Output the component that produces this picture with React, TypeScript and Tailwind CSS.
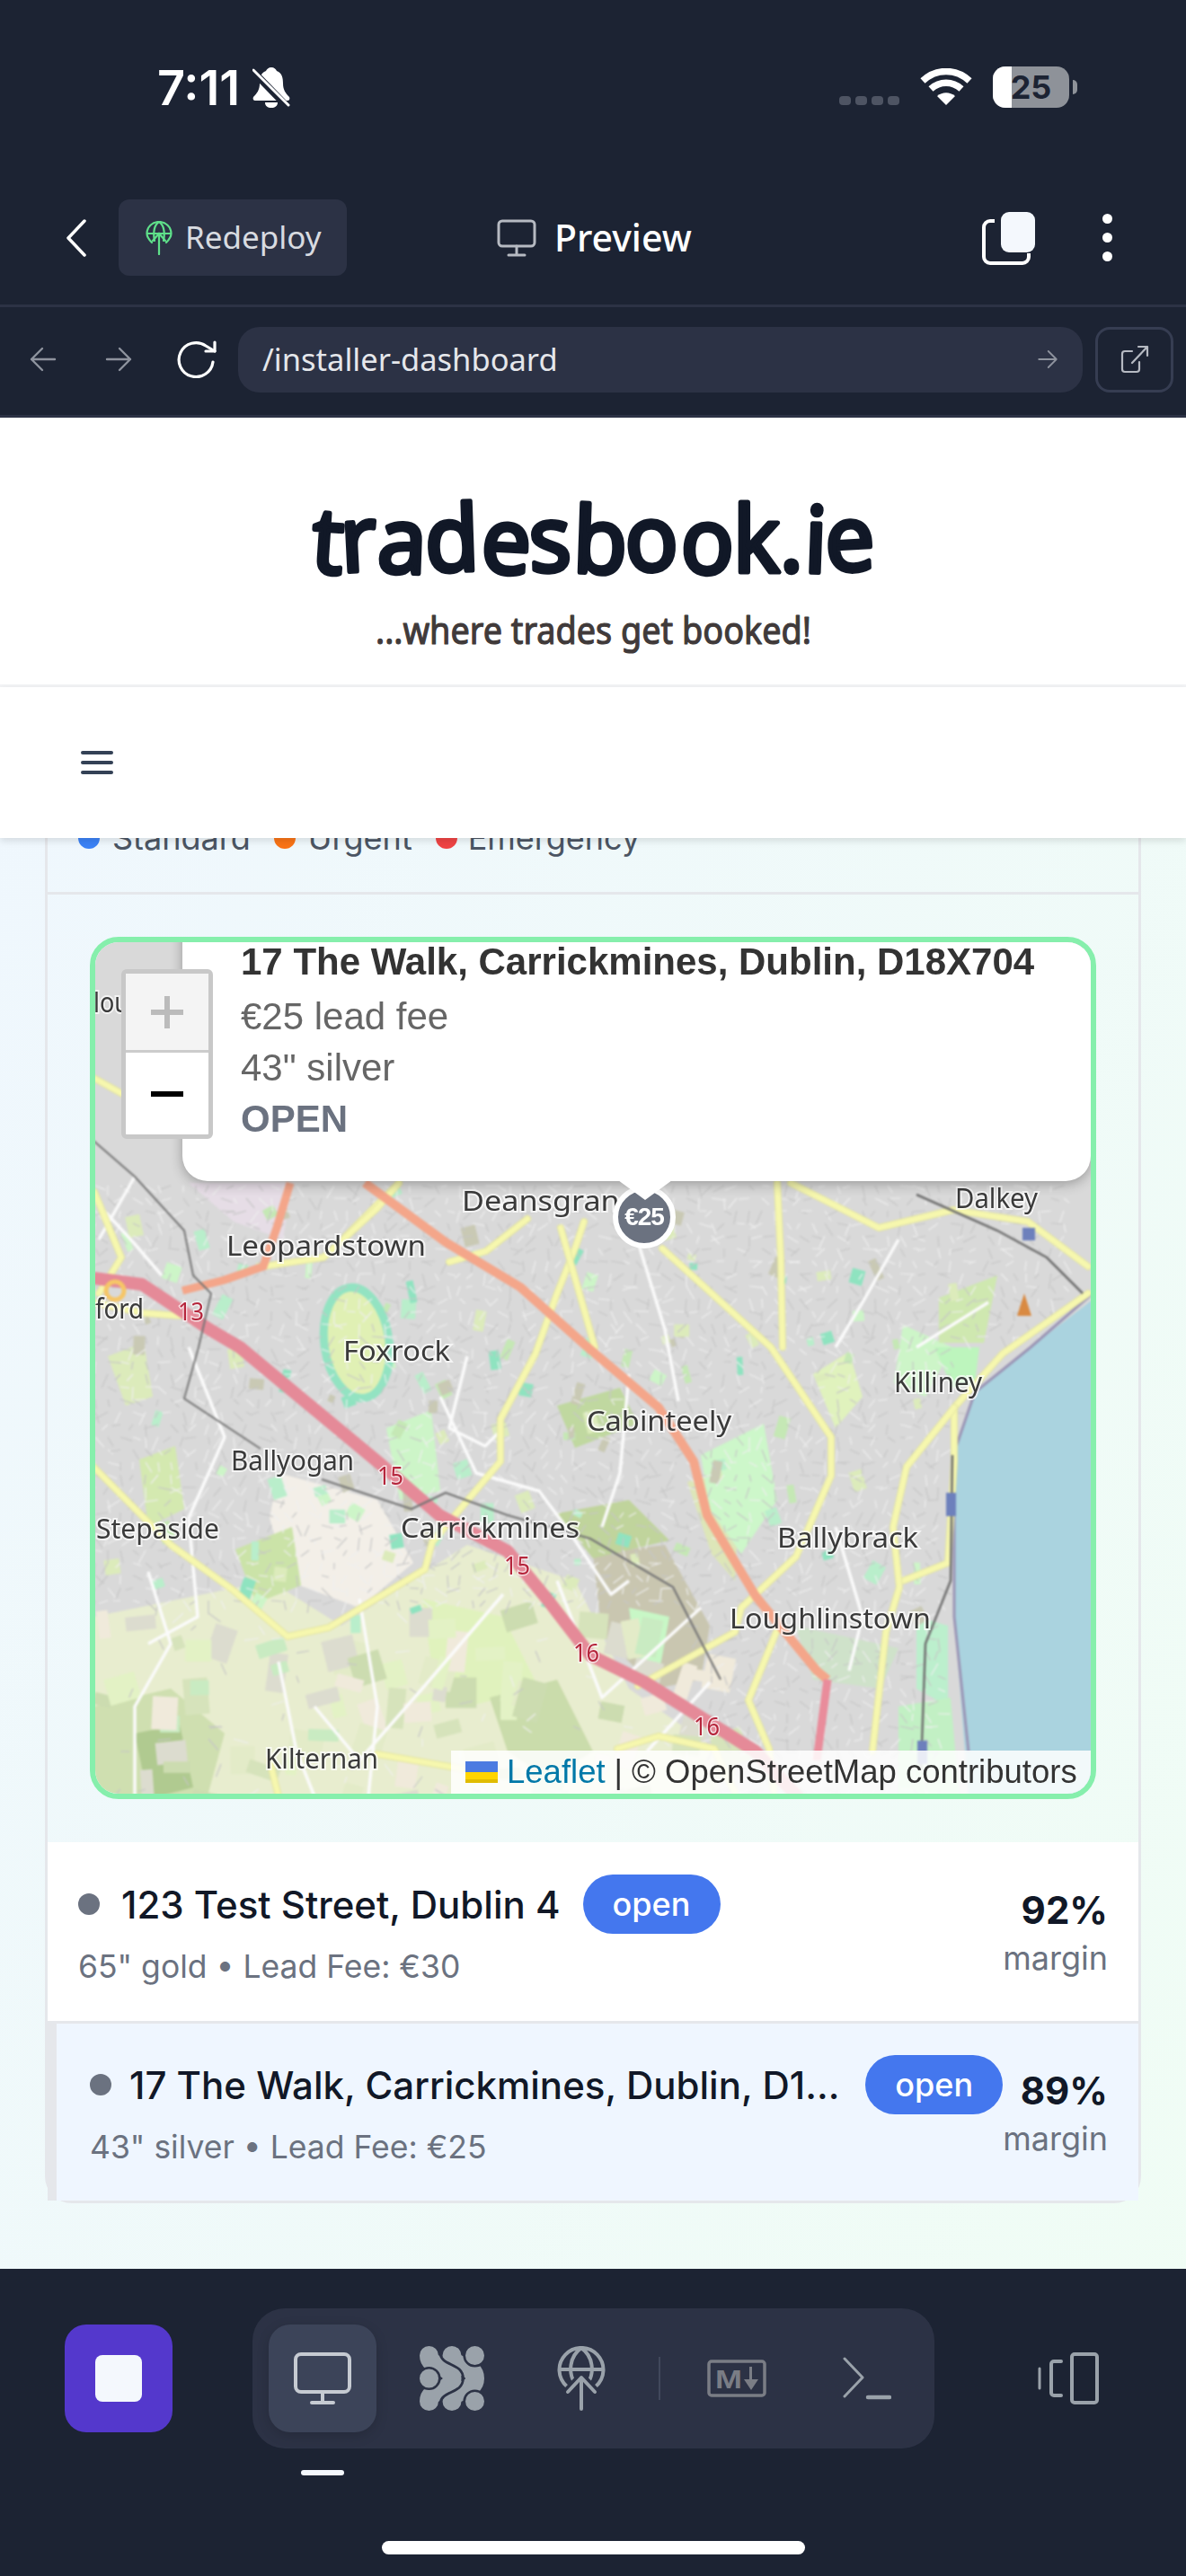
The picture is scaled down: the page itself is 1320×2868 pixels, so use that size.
import React from "react";

const ROADS_YELLOW = [
  "M104 1633L190 1720L259 1770L320 1822L366 1812L473 1747L481 1717L557 1627L557 1580L596 1507L620 1440L640 1390L650 1360",
  "M384 1377L444 1317",
  "M293 1410L360 1400L420 1345L444 1317",
  "M500 1405L541 1393L587 1357",
  "M624 1367L662 1500",
  "M737 1390L858 1500L925 1600L925 1643L886 1733L825 1790L818 1817L710 1877",
  "M865 1317L869 1400L871 1500",
  "M880 1317L978 1367L1061 1347L1144 1360L1211 1410",
  "M1211 1440L1116 1507L1062 1567L1062 1627L1055 1740L1005 1760",
  "M1062 1567L1009 1633L994 1700L1001 1767L986 1817L971 1950",
  "M864 1817L833 1893L856 1947L862 2000",
  "M687 1947L733 1933L795 1947L820 2000",
  "M420 1953L519 1970",
  "M105 1327L135 1400L110 1440",
  "M104 1200L140 1220",
  "M104 1450L160 1462L200 1465",
  "M300 1960L310 2000",
];

const ROADS_WHITE = [
  "M104 1335L150 1385L180 1420",
  "M150 1310L110 1380",
  "M490 1555L530 1640L600 1660L630 1700L680 1775L700 1760",
  "M520 1510L500 1590L540 1610L560 1590",
  "M700 1530L690 1640L670 1700",
  "M210 1500L250 1600L210 1690L220 1800L165 1830",
  "M165 1750L190 1830L150 1900L150 2000",
  "M700 1350L740 1480L755 1560",
  "M1000 1380L960 1450L930 1500",
  "M1100 1450L1020 1500",
  "M620 1760L670 1890L780 1790",
  "M560 1775L470 1880L400 1960L350 1900",
  "M310 1850L330 1950L350 2000",
  "M790 1873L720 1950",
  "M930 1700L960 1800L945 1860",
  "M400 1780L420 1900L410 2000",
];

const PATCHES: [string, string][] = [
  ["M104 1800L300 1760L380 1810L520 1720L640 1760L700 1880L800 1950L800 2003L104 2003Z", "#e8edcf"],
  ["M210 1317L325 1317L315 1380L260 1360Z", "#e6dde6"],
  ["M104 1900L190 1880L250 1930L230 2003L104 2003Z", "#cfdfb0"],
  ["M150 1930L200 1920L215 1990L165 2003Z", "#b0ca90"],
  ["M470 1780L560 1800L600 1880L520 1900L480 1850Z", "#e0f2bd"],
  ["M545 1890L620 1870L660 1950L610 1980L565 1950Z", "#cadcab"],
  ["M310 1640L420 1670L460 1740L400 1790L320 1760L300 1690Z", "#f3efe8"],
  ["M262 1725L325 1700L335 1765L285 1785Z", "#cbe3a8"],
  ["M660 1730L740 1720L790 1810L780 1870L730 1880L670 1820Z", "#c9c6b0"],
  ["M700 1790L745 1800L735 1855L708 1848Z", "#c8f7c6"],
  ["M620 1685L700 1670L745 1715L660 1735Z", "#c0d49c"],
  ["M765 1650L825 1630L818 1760L792 1730Z", "#dde6b8"],
  ["M430 1590L480 1570L490 1660L445 1670Z", "#cdf5c8"],
  ["M620 1565L690 1545L710 1585L640 1612Z", "#c0d8a0"],
  ["M780 1620L850 1585L865 1670L825 1730L790 1680Z", "#cdf7ca"],
  ["M120 1510L160 1495L170 1555L140 1565Z", "#dcebbb"],
  ["M155 1625L195 1610L205 1680L165 1700Z", "#d4e9b0"],
  ["M905 1530L945 1505L960 1555L930 1590Z", "#e0f2bd"],
  ["M1005 1475L1060 1500L1030 1555L995 1540Z", "#cdf5c8"],
  ["M1045 1445L1110 1420L1095 1495L1045 1495Z", "#cfe8b0"],
  ["M1040 1500L1090 1500L1085 1540L1060 1545Z", "#bdf5bd"],
  ["M1020 1800L1055 1810L1055 1900L1020 1880Z", "#bcefcd"],
  ["M885 1810L1000 1835L980 1880L905 1870Z", "#cfe2ca"],
  ["M1000 1900L1058 1890L1068 2003L1000 2003Z", "#c2f0c4"],
];

// Tile texture: small land patches and short streets scattered over the ground
const texture = (() => {
  let seed = 11;
  const rnd = () => {
    seed = (seed * 16807) % 2147483647;
    return seed / 2147483647;
  };
  const lots: { x: number; y: number; w: number; h: number; r: number; c: string }[] = [];
  const ruralColors = ["#d6e3bb", "#e3ebc8", "#ccdcb0", "#dcdccf", "#e3f2c5", "#f0eadb", "#c9ebc2"];
  for (let i = 0; i < 80; i++) {
    const x = 106 + rnd() * 690;
    const y = 1790 + rnd() * 210;
    lots.push({ x, y, w: 12 + rnd() * 26, h: 12 + rnd() * 34, r: rnd() * 40 - 20, c: ruralColors[Math.floor(rnd() * 7)] });
  }
  const urbanColors = ["#c5e8b5", "#b9eecb", "#c9c9b4", "#dcebbb", "#8fe3c0", "#cdf5c8"];
  for (let i = 0; i < 120; i++) {
    const x = 106 + rnd() * 950;
    const y = 1320 + rnd() * 480;
    lots.push({ x, y, w: 6 + rnd() * 12, h: 6 + rnd() * 20, r: rnd() * 60 - 30, c: urbanColors[Math.floor(rnd() * 6)] });
  }
  const streets: { d: string; c: string; w: number }[] = [];
  for (let y = 1320; y < 2000; y += 14) {
    for (let x = 106; x < 1210; x += 14) {
      const coast = y < 1500 ? 1190 : y < 1620 ? 1070 : 1055;
      const rural = y > 1790 && x < 780;
      if (x > coast || (rural && rnd() > 0.1)) continue;
      const a = rnd() * Math.PI;
      const l = 7 + rnd() * 10;
      streets.push({
        d: `M${x} ${y}l${(Math.cos(a) * l).toFixed(1)} ${(Math.sin(a) * l).toFixed(1)}`,
        c: rnd() > 0.5 ? "#efefef" : "#c6c6c6",
        w: 1.2,
      });
    }
  }
  return { lots, streets };
})();

const LABELS: [string, number, number, number][] = [
  ["lou", 104, 1127, 40],
  ["Deansgrange", 514, 1348, 216],
  ["Leopardstown", 252, 1398, 222],
  ["Dalkey", 1063, 1345, 92],
  ["Foxrock", 382, 1515, 119],
  ["ford", 106, 1468, 54],
  ["Killiney", 995, 1550, 98],
  ["Cabinteely", 653, 1593, 161],
  ["Ballyogan", 257, 1637, 137],
  ["Stepaside", 107, 1713, 137],
  ["Carrickmines", 446, 1712, 199],
  ["Ballybrack", 865, 1723, 157],
  ["Loughlinstown", 812, 1813, 224],
  ["Kilternan", 295, 1969, 126],
];

const ROAD_NUMBERS: [string, number, number][] = [
  ["13", 198, 1470],
  ["15", 420, 1653],
  ["15", 561, 1753],
  ["16", 638, 1850],
  ["16", 772, 1932],
];

function MapTiles() {
  return (
    <svg viewBox="106 1049 1108 948" className="block h-full w-full">
      <g className="blur-[1.2px]">
        <rect x="104" y="1047" width="1112" height="952" fill="#d9d9d9" />
        {PATCHES.map(([d, c], i) => (
          <path key={i} d={d} fill={c} />
        ))}
        {texture.lots.map((l, i) => (
          <rect key={i} x={l.x} y={l.y} width={l.w} height={l.h} fill={l.c} transform={`rotate(${l.r.toFixed(0)} ${l.x.toFixed(0)} ${l.y.toFixed(0)})`} />
        ))}
        <ellipse cx="397" cy="1495" rx="36" ry="62" fill="#e0f0b4" stroke="#93e3c2" strokeWidth="9" transform="rotate(-8 397 1495)" />
        {texture.streets.map((s, i) => (
          <path key={i} d={s.d} stroke={s.c} strokeWidth={s.w} fill="none" />
        ))}
        <path d="M1216 1317L1216 1447L1147 1500L1085 1550L1062 1617L1062 1800L1078 1999L1216 1999Z" fill="#aad3df" />
        <path d="M1216 1440L1147 1500L1085 1550L1062 1617L1062 1800L1078 1950" stroke="#9b95b5" strokeWidth="3" fill="none" />
        {ROADS_WHITE.map((d, i) => (
          <path key={i} d={d} stroke="#fbfbfb" strokeWidth="3.500" fill="none" strokeLinejoin="round" />
        ))}
        {ROADS_YELLOW.map((d, i) => (
          <g key={i} fill="none" strokeLinejoin="round" strokeLinecap="round">
            <path d={d} stroke="#e3e4a2" strokeWidth="8" />
            <path d={d} stroke="#f6f7ae" strokeWidth="6" />
          </g>
        ))}
        {/* primary roads */}
        <path d="M323 1317L308 1367L293 1410L250 1425L203 1437" stroke="#f4a68a" strokeWidth="9" fill="none" />
        <path d="M406 1317L496 1383L579 1433L654 1500L733 1567L772 1627L787 1687L841 1777L909 1860L921 1870" stroke="#f4a68a" strokeWidth="10" fill="none" strokeLinejoin="round" />
        <path d="M921 1870L909 1960" stroke="#e98c9b" strokeWidth="9" fill="none" />
        {/* motorway */}
        <path d="M104 1423L158 1430L233 1480L267 1500L427 1633L489 1687L565 1727L611 1783L657 1843L718 1873L841 1950L890 2003" stroke="#e58a98" strokeWidth="14" fill="none" strokeLinejoin="round" />
        {/* railway */}
        <path d="M104 1270L150 1310L205 1370L215 1420L235 1440L221 1500L205 1557L290 1613" stroke="#757575" strokeWidth="2" fill="none" />
        <path d="M358 1647L458 1680L496 1662L565 1687L657 1713L749 1767L802 1870" stroke="#757575" strokeWidth="2.200" fill="none" />
        <path d="M1020 1330L1110 1370L1165 1400L1205 1440M1060 1620L1058 1760L1030 1830L1025 1970" stroke="#6e6e6e" strokeWidth="2.500" fill="none" />
        <rect x="1138" y="1367" width="14" height="14" fill="#6d80bc" />
        <rect x="1053" y="1662" width="11" height="26" fill="#6d80bc" />
        <rect x="1021" y="1938" width="11" height="26" fill="#6d80bc" />
        <path d="M1132 1465L1140 1440L1148 1465Z" fill="#d98a42" />
        <circle cx="128" cy="1437" r="10" fill="none" stroke="#f6c667" strokeWidth="5" />
      </g>
      {LABELS.map(([t, x, y, w]) => (
        <text key={t} x={x} y={y} textLength={w} lengthAdjust="spacingAndGlyphs" fontFamily="Noto Sans" fontSize="30" fill="#3a3a3a" stroke="#fff" strokeOpacity="0.7" strokeWidth="4" paintOrder="stroke">
          {t}
        </text>
      ))}
      {ROAD_NUMBERS.map(([t, x, y], i) => (
        <text key={i} x={x} y={y} textLength={29} lengthAdjust="spacingAndGlyphs" fontFamily="Noto Sans" fontSize="28" fill="#b5263c" stroke="#fff" strokeOpacity="0.7" strokeWidth="3" paintOrder="stroke">
          {t}
        </text>
      ))}
    </svg>
  );
}

function ListRow({ title, sub, pct, active }: { title: string; sub: string; pct: string; active?: boolean }) {
  return (
    <div className={active ? "flex h-[197px] items-start border-l-[10px] border-[#e5e7eb] bg-[#eff6ff] pl-[37px] pr-[34px] pt-[35px]" : "flex h-[199px] items-start bg-white pl-[34px] pr-[34px] pt-[36px]"}>
      <div className="min-w-0 flex-1">
        <div className="flex h-[66px] items-center">
          <span className={active ? "mr-[20px] h-[24px] w-[24px] shrink-0 rounded-full bg-[#6b7280]" : "mr-[24px] h-[24px] w-[24px] shrink-0 rounded-full bg-[#6b7280]"} />
          <span className={active ? "truncate text-[42px] font-medium text-[#111827]" : "text-[42px] font-medium text-[#111827]"}>{title}</span>
          <span className={active ? "ml-[18px] flex h-[66px] w-[153px] shrink-0 items-center justify-center rounded-[33px] bg-[#4477ee] text-[36px] font-medium text-white" : "ml-[25px] flex h-[66px] w-[153px] shrink-0 items-center justify-center rounded-[33px] bg-[#4477ee] text-[36px] font-medium text-white"}>open</span>
        </div>
        <div className="mt-[13px] text-[35.500px] leading-[48px] text-[#6b7280]">{sub}</div>
      </div>
      <div className="shrink-0 pt-[15px] text-right">
        <div className="text-[42px] font-bold leading-[50px] text-[#111827]">{pct}</div>
        <div className="mt-[5px] text-[36px] leading-[46px] text-[#6b7280]">margin</div>
      </div>
    </div>
  );
}

function Arrow({ flip, className }: { flip?: boolean; className: string }) {
  return (
    <svg viewBox="0 0 32 32" className={className} fill="none" stroke="currentColor" strokeWidth="2.400" strokeLinecap="round" strokeLinejoin="round">
      {flip ? <path d="M29 16H3M15 4L3 16l12 12" /> : <path d="M3 16h26M17 4l12 12-12 12" />}
    </svg>
  );
}

const App = () => {
  return (
    <div className="flex h-[2868px] w-[1320px] flex-col overflow-hidden bg-gradient-to-br from-[#eff6ff] to-[#f0fdf4] font-['Inter',sans-serif]">
      {/* PHONE + BUILDER CHROME */}
      <header className="shrink-0 bg-[#1c2333]">
        <div className="flex h-[190px] items-start pt-[66px]">
          <span className="ml-[175px] text-[54px] font-semibold leading-[64px] text-white">7:11</span>
          <svg viewBox="0 0 42 46" className="ml-[14px] mt-[9px] h-[46px] w-[42px]" fill="#fff">
            <path d="M21 0c3 0 5 2 6 4 6 2 7 8 7 14 0 7 3 11 7 15 1 2 0 4-2 4H3c-2 0-3-2-2-4 4-4 7-8 7-15 0-6 1-12 7-14 1-2 3-4 6-4zM14 39h14c0 4-3 6-7 6s-7-2-7-6z" />
            <path d="M3 7l34 35" stroke="#1c2333" strokeWidth="8" />
            <path d="M1 3l39 39" stroke="#fff" strokeWidth="3" strokeLinecap="round" />
          </svg>
          <div className="ml-auto flex items-start">
            <div className="mt-[41px] flex gap-[5px]">
              <span className="h-[10px] w-[13px] rounded-[4px] bg-[#4e5463]" />
              <span className="h-[10px] w-[13px] rounded-[4px] bg-[#4e5463]" />
              <span className="h-[10px] w-[13px] rounded-[4px] bg-[#4e5463]" />
              <span className="h-[10px] w-[13px] rounded-[4px] bg-[#4e5463]" />
            </div>
            <svg viewBox="0 0 58 42" className="ml-[23px] mt-[10px] h-[42px] w-[58px]" fill="none" stroke="#fff" strokeWidth="7.500">
              <path d="M3 14C18 0 40 0 55 14" />
              <path d="M12 23c10-9 24-9 34 0" />
              <path d="M29 41L19 31c6-5 14-5 20 0z" fill="#fff" stroke="none" />
            </svg>
            <div className="relative ml-[23px] mt-[8px] flex h-[46px] w-[85px] items-center justify-center overflow-hidden rounded-[14px] bg-[#8e9299]">
              <span className="absolute inset-y-0 left-0 w-[21px] bg-white" />
              <span className="relative text-[36px] font-bold leading-none text-[#1c2333]">25</span>
            </div>
            <span className="ml-[4px] mr-[121px] mt-[23px] h-[16px] w-[5px] rounded-r-full bg-[#8e9299]" />
          </div>
        </div>
        <div className="flex h-[152px] items-center border-b-[3px] border-[#2c3245]">
          <svg viewBox="0 0 24 42" className="ml-[73px] h-[42px] w-[24px]" fill="none" stroke="#fff" strokeWidth="3.500" strokeLinecap="round" strokeLinejoin="round">
            <path d="M21 2L3 21l18 19" />
          </svg>
          <div className="ml-[35px] flex h-[85px] w-[254px] items-center rounded-[12px] bg-[#2c3245] pl-[30px]">
            <svg viewBox="0 0 30 38" className="h-[38px] w-[30px]" fill="none" stroke="#5fe08a" strokeWidth="2.200" strokeLinecap="round">
              <path d="M7 24C3 20 1.500 17 1.500 14a13.500 13 0 0 1 27 0c0 3-1.500 6-5.500 10" />
              <path d="M10 22C8 12 10 4 15 1c5 3 7 11 5 21M2 14h26" />
              <path d="M15 37V14M8 22l7-8 7 8" />
            </svg>
            <span className="ml-[14px] font-['Noto_Sans',sans-serif] text-[35px] text-[#d8dbe0]">Redeploy</span>
          </div>
          <svg viewBox="0 0 44 42" className="ml-[167px] h-[42px] w-[44px]" fill="none" stroke="#b6bac2" strokeWidth="3" strokeLinecap="round">
            <rect x="2" y="2" width="40" height="28" rx="4" />
            <path d="M22 30v9M13 40h18" />
          </svg>
          <span className="ml-[20px] font-['Noto_Sans',sans-serif] text-[41px] font-medium text-white">Preview</span>
          <svg viewBox="0 0 60 60" className="ml-[323px] h-[60px] w-[60px]" fill="none">
            <path d="M14 11H9a7 7 0 0 0-7 7v33a7 7 0 0 0 7 7h36a7 7 0 0 0 7-7v-4" stroke="#fff" strokeWidth="4" />
            <rect x="21" y="1" width="38" height="45" rx="9" fill="#f4f8fd" />
          </svg>
          <div className="ml-[74px] flex flex-col gap-[10px]">
            <span className="h-[11px] w-[11px] rounded-full bg-white" />
            <span className="h-[11px] w-[11px] rounded-full bg-white" />
            <span className="h-[11px] w-[11px] rounded-full bg-white" />
          </div>
        </div>
        <div className="flex h-[123px] items-center border-b-[3px] border-[#2c3245] pb-[4px]">
          <Arrow flip className="ml-[32px] h-[32px] w-[32px] text-[#8e939e]" />
          <Arrow className="ml-[52px] h-[32px] w-[32px] text-[#8e939e]" />
          <svg viewBox="0 0 46 42" className="ml-[48px] h-[42px] w-[46px]" fill="none" stroke="#fff" strokeWidth="3.200" strokeLinecap="round" strokeLinejoin="round">
            <path d="M41 24A19 19 0 1 1 33 6l10 6" />
            <path d="M43 2v10H33" />
          </svg>
          <div className="ml-[23px] flex h-[73px] w-[940px] items-center justify-between rounded-[24px] bg-[#2c3245] pl-[27px] pr-[27px]">
            <span className="font-['Noto_Sans',sans-serif] text-[34.500px] text-[#e5e7eb]">/installer-dashboard</span>
            <Arrow className="h-[24px] w-[24px] text-[#8e939e]" />
          </div>
          <div className="ml-[14px] flex h-[73px] w-[87px] items-center justify-center rounded-[16px] border-[3px] border-[#363d52]">
            <svg viewBox="0 0 32 32" className="h-[32px] w-[32px]" fill="none" stroke="#b6bac2" strokeWidth="2.200" strokeLinecap="round" strokeLinejoin="round">
              <path d="M13 7H5a3 3 0 0 0-3 3v17a3 3 0 0 0 3 3h13a3 3 0 0 0 3-3v-8M13 20L30 2M20 2h10v10" />
            </svg>
          </div>
        </div>
      </header>

      {/* LOGO */}
      <div className="flex h-[300px] shrink-0 flex-col items-center border-b-[3px] border-[#f3f4f6] bg-white pt-[62px]">
        <svg viewBox="0 0 660 130" className="h-[130px] w-[660px]">
          <text x="15" y="110" textLength="630" lengthAdjust="spacingAndGlyphs" fontFamily="Noto Sans" fontSize="102" fill="#111827" stroke="#111827" strokeWidth="5" strokeLinejoin="round" rotate="4 -3 2 -2 3 -2 2 -3 3 0 -3 2 -3">
            tradesbook.ie
          </text>
        </svg>
        <svg viewBox="0 0 500 58" className="mt-[18px] h-[58px] w-[500px]">
          <text x="8" y="42" textLength="485" lengthAdjust="spacingAndGlyphs" fontFamily="Noto Sans" fontSize="42" fill="#403a3a" stroke="#403a3a" strokeWidth="1.200" strokeLinejoin="round">
            ...where trades get booked!
          </text>
        </svg>
      </div>
      {/* NAV */}
      <nav className="relative z-10 flex h-[168px] shrink-0 items-center bg-white pl-[90px] shadow-[0_3px_8px_rgba(0,0,0,0.12)]">
        <div className="flex w-[36px] flex-col gap-[7px]">
          <span className="h-[4px] rounded-full bg-[#334155]" />
          <span className="h-[4px] rounded-full bg-[#334155]" />
          <span className="h-[4px] rounded-full bg-[#334155]" />
        </div>
      </nav>

      {/* CONTENT */}
      <main className="min-h-0 flex-1 overflow-hidden px-[50px]">
        <div className="rounded-b-[30px] border-x-[3px] border-b-[3px] border-[#e5e7eb]">
          <div className="flex h-[63px] flex-col border-b-[3px] border-[#e5e7eb]">
            <div className="-mt-[22px] flex items-center pl-[34px] text-[36px] leading-[44px] text-[#4b5563]">
              <span className="mr-[14px] h-[24px] w-[24px] rounded-full bg-[#3b82f6]" />
              <span>Standard</span>
              <span className="ml-[26px] mr-[14px] h-[24px] w-[24px] rounded-full bg-[#f97316]" />
              <span>Urgent</span>
              <span className="ml-[26px] mr-[12px] h-[24px] w-[24px] rounded-full bg-[#ef4444]" />
              <span>Emergency</span>
            </div>
          </div>
          <div className="px-[47px] pb-[48px] pt-[47px]">
            <div className="relative h-[960px] overflow-hidden rounded-[32px] border-[6px] border-[#86efac] font-['Liberation_Sans',sans-serif]">
              <MapTiles />
              {/* marker */}
              <div className="absolute left-[576px] top-[271px] flex h-[70px] w-[70px] items-center justify-center rounded-full border-[6px] border-white bg-[#6b7280] text-[28px] font-bold tracking-[-1px] text-white">€25</div>
              {/* popup */}
              <div className="absolute left-[97px] right-0 top-[-102px] h-[368px] rounded-[28px] bg-white pl-[65px] pt-[95px] shadow-[0_3px_14px_rgba(0,0,0,0.3)]">
                <div className="mb-[4px] text-[42px] font-bold leading-[57px] text-[#333]">17 The Walk, Carrickmines, Dublin, D18X704</div>
                <div className="text-[42px] leading-[57px] text-[#666]">€25 lead fee</div>
                <div className="text-[42px] leading-[57px] text-[#666]">43" silver</div>
                <div className="text-[42px] font-bold leading-[57px] text-[#6b7280]">OPEN</div>
              </div>
              <svg viewBox="0 0 60 22" className="absolute left-[582px] top-[265px] h-[22px] w-[60px]" fill="#fff">
                <path d="M0 0h60L30 22z" />
              </svg>
              {/* zoom control */}
              <div className="absolute left-[29px] top-[30px] w-[102px] overflow-hidden rounded-[6px] border-[5px] border-[#c8c8c8] bg-white">
                <div className="flex h-[88px] items-center justify-center border-b-[3px] border-[#ccc] bg-[#f4f4f4]">
                  <svg viewBox="0 0 36 36" className="h-[36px] w-[36px]" fill="#bbb">
                    <path d="M15 0h6v15h15v6H21v15h-6V21H0v-6h15z" />
                  </svg>
                </div>
                <div className="flex h-[91px] items-center justify-center">
                  <span className="h-[6px] w-[36px] bg-black" />
                </div>
              </div>
              {/* attribution */}
              <div className="absolute bottom-0 right-0 flex h-[48px] w-[712px] items-center bg-white/85 pl-[16px] text-[36.500px] text-[#333]">
                <svg viewBox="0 0 36 24" className="mr-[10px] h-[24px] w-[36px]">
                  <rect width="36" height="12" fill="#4c7be1" />
                  <rect y="12" width="36" height="8" fill="#ffd500" />
                  <rect y="20" width="36" height="4" fill="#e0bc00" />
                </svg>
                <span className="text-[#0078a8]">Leaflet</span>
                <span className="mx-[10px]">|</span>
                <span>© OpenStreetMap contributors</span>
              </div>
            </div>
          </div>
          <div className="border-b-[3px] border-[#e5e7eb]">
            <ListRow title="123 Test Street, Dublin 4" sub={'65" gold • Lead Fee: €30'} pct="92%" />
          </div>
          <ListRow active title="17 The Walk, Carrickmines, Dublin, D18X704" sub={'43" silver • Lead Fee: €25'} pct="89%" />
        </div>
      </main>

      {/* BOTTOM BAR */}
      <footer className="flex h-[342px] shrink-0 flex-col items-center bg-[#1c2333]">
        <div className="mt-[44px] flex h-[156px] w-full items-center">
          <div className="ml-[72px] flex h-[120px] w-[120px] items-center justify-center rounded-[24px] bg-[#5438cc]">
            <span className="h-[52px] w-[52px] rounded-[8px] bg-[#f4f8fd]" />
          </div>
          <div className="ml-[89px] flex h-[156px] w-[759px] items-center rounded-[36px] bg-[#2c3245] pl-[18px]">
            <div className="flex h-[120px] w-[120px] items-center justify-center rounded-[24px] bg-[#3c4459] shadow-[0_4px_14px_rgba(0,0,0,0.15)]">
              <svg viewBox="0 0 66 60" className="h-[60px] w-[66px]" fill="none" stroke="#c6cbd2" strokeWidth="4" strokeLinecap="round" strokeLinejoin="round">
                <rect x="3" y="3" width="60" height="42" rx="6" />
                <path d="M33 45v11M21 57h24" />
              </svg>
            </div>
            <svg viewBox="0 0 72 72" className="ml-[48px] h-[72px] w-[72px]" fill="none" strokeLinecap="round">
              <path d="M10.500 10.500C10.500 25 36 20 36 36C36 52 10.500 47 10.500 61.500" stroke="#9aa2aa" strokeWidth="21" />
              <path d="M36 10.500C36 25 61.500 20 61.500 36C61.500 52 36 47 36 61.500" stroke="#9aa2aa" strokeWidth="21" />
              <path d="M23 8C24 23 48 18 48.500 36C48 54 24 49 23 64" stroke="#2c3245" strokeWidth="2.800" />
              <circle cx="61.500" cy="10.500" r="11.800" fill="#9aa2aa" stroke="#2c3245" strokeWidth="2.600" />
              <circle cx="61.500" cy="61.500" r="11.800" fill="#9aa2aa" stroke="#2c3245" strokeWidth="2.600" />
              <circle cx="10.500" cy="36" r="11.800" fill="#9aa2aa" stroke="#2c3245" strokeWidth="2.600" />
            </svg>
            <svg viewBox="0 0 54 72" className="ml-[81px] h-[72px] w-[54px]" fill="none" stroke="#9aa2aa" strokeWidth="4" strokeLinecap="round" strokeLinejoin="round">
              <path d="M11 45A24.500 24.500 0 1 1 43 45" />
              <path d="M27 2C13 12 13 30 19 40M27 2c14 10 14 28 8 38M3 26h48" />
              <path d="M12 51L27 35l15 16" stroke="#2c3245" strokeWidth="11" />
              <path d="M27 70V36M12 51L27 35l15 16" />
            </svg>
            <span className="ml-[59px] h-[48px] w-[2px] bg-[#41485c]" />
            <svg viewBox="0 0 66 42" className="ml-[52px] h-[42px] w-[66px]">
              <rect x="2" y="2" width="62" height="38" rx="3" fill="none" stroke="#7a7d85" strokeWidth="3.500" />
              <text x="9" y="32" fontFamily="Liberation Sans" fontSize="30" fontWeight="700" fill="#7a7d85" textLength="30" lengthAdjust="spacingAndGlyphs">M</text>
              <path d="M50 8v14h7L49 34 41 22h6V8z" fill="#7a7d85" />
            </svg>
            <svg viewBox="0 0 54 48" className="ml-[85px] h-[48px] w-[54px]" fill="none" stroke="#9aa2aa" strokeLinecap="round" strokeLinejoin="round">
              <path d="M2 2l20 21L2 44" strokeWidth="3" />
              <path d="M28 45h24" strokeWidth="4.500" />
            </svg>
          </div>
          <svg viewBox="0 0 68 58" className="ml-[115px] h-[58px] w-[68px]" fill="none" stroke="#9aa2aa" strokeLinecap="round" strokeLinejoin="round">
            <rect x="38" y="2" width="28" height="54" rx="3" strokeWidth="4" />
            <path d="M26 10h-8a3 3 0 0 0-3 3v32a3 3 0 0 0 3 3h8" strokeWidth="4" />
            <path d="M2 18v22" strokeWidth="3" />
          </svg>
        </div>
        <span className="ml-[-602px] mt-[24px] h-[6px] w-[48px] rounded-full bg-[#f4f8fd]" />
        <span className="mt-[73px] h-[15px] w-[471px] rounded-full bg-white" />
      </footer>
    </div>
  );
};

export default App;
